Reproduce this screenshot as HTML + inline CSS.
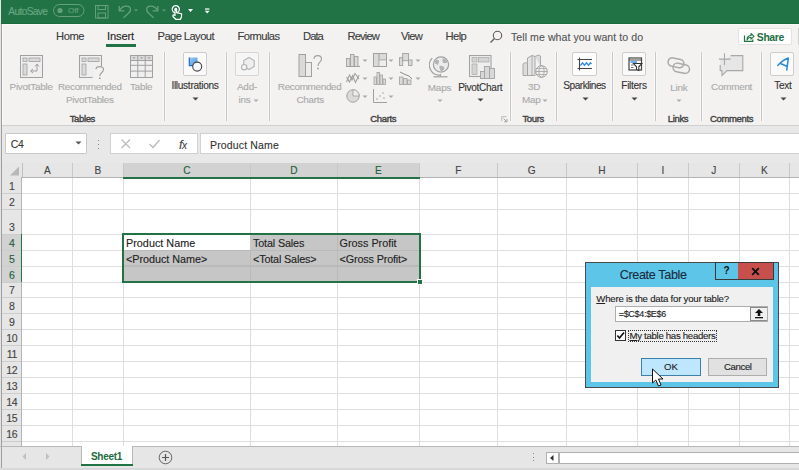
<!DOCTYPE html>
<html><head><meta charset="utf-8"><style>
html,body{margin:0;padding:0;}
body{width:799px;height:470px;overflow:hidden;position:relative;background:#fff;font-family:"Liberation Sans", sans-serif;}
div,svg{font-family:"Liberation Sans", sans-serif;}
div{-webkit-text-stroke:0.12px currentColor;}
</style></head><body>
<div style="position:absolute;left:0px;top:0px;width:799px;height:24px;background:#217346"></div><div style="position:absolute;left:0px;top:23px;width:799px;height:1px;background:#1c6a3f"></div><div style="position:absolute;left:8.3px;top:6.69px;font-size:10.1px;line-height:10.1px;color:#69a883;font-weight:400;letter-spacing:-0.6px;white-space:nowrap;">AutoSave</div><svg style="position:absolute;left:53px;top:4px;" width="32" height="13" viewBox="0 0 32 13"><rect x="0.5" y="0.5" width="30.5" height="12" rx="6" fill="none" stroke="#64a07c" stroke-width="1"/><circle cx="7" cy="6.5" r="2.6" fill="#64a07c"/></svg><div style="position:absolute;left:68px;top:6.76px;font-size:8px;line-height:8px;color:#64a07c;font-weight:400;letter-spacing:0px;white-space:nowrap;">Off</div><svg style="position:absolute;left:95px;top:5px;" width="14" height="14" viewBox="0 0 14 14"><rect x="0.5" y="0.5" width="12.5" height="12.5" fill="none" stroke="#64a07c"/><rect x="3" y="0.5" width="7.5" height="4" fill="none" stroke="#64a07c"/><rect x="3" y="8" width="7.5" height="5" fill="none" stroke="#64a07c"/></svg><svg style="position:absolute;left:117px;top:5px;" width="24" height="15" viewBox="0 0 24 15"><path d="M2.3 0.9 L2.3 5.8 L7.5 5.8" fill="none" stroke="#64a07c" stroke-width="1.3"/><path d="M2.8 5.3 C6 -0.5 13.5 0.2 13.5 4.8 C13.5 6.5 12.8 7.3 6.5 12.8" fill="none" stroke="#64a07c" stroke-width="1.3"/><path d="M17 4.5 L21 4.5 L19 6.5 Z" fill="#64a07c"/></svg><svg style="position:absolute;left:145px;top:5px;" width="24" height="15" viewBox="0 0 24 15"><path d="M12.8 0.9 L12.8 5.8 L7.6 5.8" fill="none" stroke="#64a07c" stroke-width="1.3"/><path d="M12.3 5.3 C9.1 -0.5 1.6 0.2 1.6 4.8 C1.6 6.5 2.3 7.3 8.6 12.8" fill="none" stroke="#64a07c" stroke-width="1.3"/><path d="M17 4.5 L21 4.5 L19 6.5 Z" fill="#64a07c"/></svg><svg style="position:absolute;left:171px;top:5px;" width="13" height="16" viewBox="0 0 13 16"><circle cx="4.8" cy="4.3" r="3.6" fill="none" stroke="#fff" stroke-width="1.2"/><circle cx="4.8" cy="4.2" r="1.4" fill="#fff"/><path d="M4 5.5 L4 10.5 L2.8 9.8 C1.8 9.8 1.5 11 2.2 11.8 L4.8 14.3 L9.3 14.3 C10.3 13.3 10.6 12 10.6 10.3 L10.6 8.8 L5.6 7.6 L5.6 5.5 Z" fill="#217346" stroke="#fff" stroke-width="1.2" stroke-linejoin="round"/></svg><svg style="position:absolute;left:187px;top:8px;" width="7" height="5" viewBox="0 0 7 5"><path d="M1 1 L6 1 L3.5 4 Z" fill="#fff"/></svg><svg style="position:absolute;left:204px;top:7px;" width="8" height="8" viewBox="0 0 8 8"><rect x="1" y="1.3" width="4.4" height="1.4" fill="#e8e8e8"/><path d="M0.8 3.8 L5.6 3.8 L3.2 6.6 Z" fill="#fff"/></svg><div style="position:absolute;left:0px;top:24px;width:799px;height:101px;background:#f3f2f1"></div><div style="position:absolute;left:0px;top:24px;width:799px;height:1px;background:#f8f8f8"></div><div style="position:absolute;left:56px;top:30.84px;font-size:11.2px;line-height:11.2px;color:#3c3c3c;font-weight:400;letter-spacing:-0.45px;white-space:nowrap;">Home</div><div style="position:absolute;left:107px;top:30.84px;font-size:11.2px;line-height:11.2px;color:#262626;font-weight:400;letter-spacing:-0.15px;white-space:nowrap;">Insert</div><div style="position:absolute;left:157.5px;top:30.84px;font-size:11.2px;line-height:11.2px;color:#3c3c3c;font-weight:400;letter-spacing:-0.58px;white-space:nowrap;">Page Layout</div><div style="position:absolute;left:237.5px;top:30.84px;font-size:11.2px;line-height:11.2px;color:#3c3c3c;font-weight:400;letter-spacing:-0.58px;white-space:nowrap;">Formulas</div><div style="position:absolute;left:303px;top:30.84px;font-size:11.2px;line-height:11.2px;color:#3c3c3c;font-weight:400;letter-spacing:-0.95px;white-space:nowrap;">Data</div><div style="position:absolute;left:347.5px;top:30.84px;font-size:11.2px;line-height:11.2px;color:#3c3c3c;font-weight:400;letter-spacing:-0.87px;white-space:nowrap;">Review</div><div style="position:absolute;left:401px;top:30.84px;font-size:11.2px;line-height:11.2px;color:#3c3c3c;font-weight:400;letter-spacing:-0.7px;white-space:nowrap;">View</div><div style="position:absolute;left:445.5px;top:30.84px;font-size:11.2px;line-height:11.2px;color:#3c3c3c;font-weight:400;letter-spacing:-0.57px;white-space:nowrap;">Help</div><div style="position:absolute;left:106px;top:44px;width:29.5px;height:2.5px;background:#217346"></div><svg style="position:absolute;left:489px;top:30px;" width="14" height="14" viewBox="0 0 14 14"><circle cx="8.5" cy="5.5" r="4.2" fill="none" stroke="#5a5a5a" stroke-width="1.1"/><path d="M5.5 8.5 L1.5 12.5" stroke="#5a5a5a" stroke-width="1.3"/></svg><div style="position:absolute;left:511px;top:31.62px;font-size:10.6px;line-height:10.6px;color:#555;font-weight:400;letter-spacing:0.05px;white-space:nowrap;">Tell me what you want to do</div><div style="position:absolute;left:738px;top:28px;width:53.5px;height:17px;background:#fdfdfd;border:1px solid #e2e2e2;border-radius:2px;box-sizing:border-box"></div><svg style="position:absolute;left:743px;top:31px;" width="13" height="12" viewBox="0 0 13 12"><path d="M1.5 4.5 L1.5 10.3 L9.8 10.3 L9.8 8.5" fill="none" stroke="#217346" stroke-width="1.2"/><path d="M4 9 C4 6 5.5 4.5 8 4.5 L8 2.5 L11 5.3 L8 8.1 L8 6.3 C6.5 6.3 5 7 4 9Z" fill="none" stroke="#217346" stroke-width="1.1" stroke-linejoin="round"/></svg><div style="position:absolute;left:756.8px;top:33.15px;font-size:10.4px;line-height:10.4px;color:#1f6e43;font-weight:700;letter-spacing:-0.35px;white-space:nowrap;-webkit-text-stroke:0;">Share</div><div style="position:absolute;left:797.5px;top:28px;width:1px;height:17px;background:#d0d0d0"></div><div style="position:absolute;left:163px;top:52px;width:3px;height:69px;background:#f9f9f9"></div><div style="position:absolute;left:164px;top:52px;width:1px;height:69px;background:#c6c6c6"></div><div style="position:absolute;left:225px;top:52px;width:3px;height:69px;background:#f9f9f9"></div><div style="position:absolute;left:226px;top:52px;width:1px;height:69px;background:#c6c6c6"></div><div style="position:absolute;left:268px;top:52px;width:3px;height:69px;background:#f9f9f9"></div><div style="position:absolute;left:269px;top:52px;width:1px;height:69px;background:#c6c6c6"></div><div style="position:absolute;left:509px;top:52px;width:3px;height:69px;background:#f9f9f9"></div><div style="position:absolute;left:510px;top:52px;width:1px;height:69px;background:#c6c6c6"></div><div style="position:absolute;left:555px;top:52px;width:3px;height:69px;background:#f9f9f9"></div><div style="position:absolute;left:556px;top:52px;width:1px;height:69px;background:#c6c6c6"></div><div style="position:absolute;left:611px;top:52px;width:3px;height:69px;background:#f9f9f9"></div><div style="position:absolute;left:612px;top:52px;width:1px;height:69px;background:#c6c6c6"></div><div style="position:absolute;left:654px;top:52px;width:3px;height:69px;background:#f9f9f9"></div><div style="position:absolute;left:655px;top:52px;width:1px;height:69px;background:#c6c6c6"></div><div style="position:absolute;left:700px;top:52px;width:3px;height:69px;background:#f9f9f9"></div><div style="position:absolute;left:701px;top:52px;width:1px;height:69px;background:#c6c6c6"></div><div style="position:absolute;left:760px;top:52px;width:3px;height:69px;background:#f9f9f9"></div><div style="position:absolute;left:761px;top:52px;width:1px;height:69px;background:#c6c6c6"></div><div style="position:absolute;left:0px;top:124.5px;width:799px;height:1px;background:#d0d0d0"></div><div style="position:absolute;left:0px;top:125.5px;width:799px;height:345px;background:#e8e8e8"></div><svg style="position:absolute;left:20px;top:54.5px;" width="26" height="25" viewBox="0 0 26 25"><rect x="0.5" y="0.5" width="22" height="22" fill="#efefef" stroke="#a0a0a0" stroke-width="1"/><rect x="3" y="3" width="4" height="3.5" fill="#dadada" stroke="#a0a0a0" stroke-width="0.8"/><rect x="9" y="3" width="11" height="3.5" fill="#dadada" stroke="#a0a0a0" stroke-width="0.8"/><rect x="3" y="9" width="4" height="11" fill="#dadada" stroke="#a0a0a0" stroke-width="0.8"/><path d="M17 9.5 L17 16 L11 16" fill="none" stroke="#a0a0a0" stroke-width="1"/><path d="M15 11.5 L17 9 L19 11.5" fill="none" stroke="#a0a0a0" stroke-width="1"/><path d="M13 14 L10.5 16 L13 18" fill="none" stroke="#a0a0a0" stroke-width="1"/></svg><svg style="position:absolute;left:79px;top:54.5px;" width="26" height="25" viewBox="0 0 26 25"><rect x="0.5" y="0.5" width="22" height="22" fill="#efefef"/><path d="M13.5 22.5 L0.5 22.5 L0.5 0.5 L22.5 0.5 L22.5 11" fill="none" stroke="#a0a0a0" stroke-width="1.1"/><rect x="3" y="3" width="4" height="3.5" fill="#dadada" stroke="#a0a0a0" stroke-width="0.8"/><rect x="9" y="3" width="11" height="3.5" fill="#dadada" stroke="#a0a0a0" stroke-width="0.8"/><rect x="3" y="9" width="4" height="11" fill="#dadada" stroke="#a0a0a0" stroke-width="0.8"/><rect x="15" y="11" width="10" height="13" fill="#f3f2f1"/><path d="M17 14.2 C17 10.8 24.5 10.5 24.5 14.5 C24.5 17.5 20.8 17.5 20.8 21" fill="none" stroke="#a0a0a0" stroke-width="1.2"/><circle cx="20.8" cy="23.2" r="0.9" fill="#a0a0a0"/></svg><svg style="position:absolute;left:130px;top:54.5px;" width="24" height="24" viewBox="0 0 24 24"><rect x="0.5" y="0.5" width="22" height="22" fill="#efefef" stroke="#a0a0a0"/><rect x="0.5" y="0.5" width="22" height="5" fill="#dadada" stroke="#a0a0a0"/><line x1="7.8" y1="0.5" x2="7.8" y2="22.5" stroke="#a0a0a0"/><line x1="15.2" y1="0.5" x2="15.2" y2="22.5" stroke="#a0a0a0"/><line x1="0.5" y1="10.3" x2="22.5" y2="10.3" stroke="#a0a0a0"/><line x1="0.5" y1="16.1" x2="22.5" y2="16.1" stroke="#a0a0a0"/><path d="M2.5 2.3 L5.5 2.3 L4 4 Z" fill="#a0a0a0"/><path d="M10.0 2.3 L13.0 2.3 L11.5 4 Z" fill="#a0a0a0"/><path d="M17.5 2.3 L20.5 2.3 L19 4 Z" fill="#a0a0a0"/></svg><div style="position:absolute;left:9.6px;top:82.31px;font-size:9.9px;line-height:9.9px;color:#a9a9a9;font-weight:400;letter-spacing:-0.25px;white-space:nowrap;">PivotTable</div><div style="position:absolute;left:58px;top:82.31px;font-size:9.9px;line-height:9.9px;color:#a9a9a9;font-weight:400;letter-spacing:-0.3px;white-space:nowrap;">Recommended</div><div style="position:absolute;left:66px;top:95.31px;font-size:9.9px;line-height:9.9px;color:#a9a9a9;font-weight:400;letter-spacing:-0.25px;white-space:nowrap;">PivotTables</div><div style="position:absolute;left:130px;top:82.31px;font-size:9.9px;line-height:9.9px;color:#a9a9a9;font-weight:400;letter-spacing:-0.25px;white-space:nowrap;">Table</div><div style="position:absolute;left:-117.7px;width:400px;text-align:center;top:113.77px;font-size:9.5px;line-height:9.5px;color:#444;font-weight:400;letter-spacing:-0.35px;white-space:nowrap;-webkit-text-stroke:0.4px currentColor;">Tables</div><div style="position:absolute;left:183px;top:51.5px;width:24px;height:24px;background:#fafafa;border:1px solid #cdcdcd;border-radius:2px;box-sizing:border-box"></div><svg style="position:absolute;left:183px;top:51.5px;" width="24" height="24" viewBox="0 0 24 24"><defs><linearGradient id="gb" x1="0" y1="0" x2="1" y2="1"><stop offset="0" stop-color="#9ccbf5"/><stop offset="1" stop-color="#4a92de"/></linearGradient></defs><rect x="6" y="5.5" width="8.5" height="8.5" fill="url(#gb)"/><path d="M6.3 5.5 L6.3 13.7 L14.5 13.7" fill="none" stroke="#2a6fc4" stroke-width="1.2"/><circle cx="14.2" cy="14.6" r="4.5" fill="#fafafa" stroke="#444" stroke-width="1.1"/></svg><div style="position:absolute;left:-5px;width:400px;text-align:center;top:80.69px;font-size:10.1px;line-height:10.1px;color:#333;font-weight:400;letter-spacing:-0.3px;white-space:nowrap;">Illustrations</div><svg style="position:absolute;left:192px;top:97px;" width="7" height="4" viewBox="0 0 7 4"><path d="M0.5 0.5 L6.5 0.5 L3.5 3.5Z" fill="#444"/></svg><div style="position:absolute;left:235px;top:51.5px;width:24px;height:24px;background:#f6f6f6;border:1px solid #d6d6d6;border-radius:2px;box-sizing:border-box"></div><svg style="position:absolute;left:235px;top:51.5px;" width="24" height="24" viewBox="0 0 24 24"><path d="M14 5.5 L19.2 8.5 L19.2 14.5 L14 17.5 L8.8 14.5 L8.8 8.5 Z" fill="#efefef" stroke="#b4b4b4" stroke-width="1.1"/><circle cx="9.2" cy="15.2" r="2.7" fill="#f4f4f4" stroke="#b4b4b4" stroke-width="1.1"/></svg><div style="position:absolute;left:47px;width:400px;text-align:center;top:82.31px;font-size:9.9px;line-height:9.9px;color:#a9a9a9;font-weight:400;letter-spacing:-0.2px;white-space:nowrap;">Add-</div><div style="position:absolute;left:44.5px;width:400px;text-align:center;top:95.31px;font-size:9.9px;line-height:9.9px;color:#a9a9a9;font-weight:400;letter-spacing:-0.2px;white-space:nowrap;">ins</div><svg style="position:absolute;left:252.5px;top:98.5px;" width="6" height="4" viewBox="0 0 6 4"><path d="M0.5 0.5 L5.5 0.5 L3 3Z" fill="#a9a9a9"/></svg><svg style="position:absolute;left:298px;top:54px;" width="26" height="24" viewBox="0 0 26 24"><rect x="1" y="0.5" width="6.5" height="22" fill="#dadada" stroke="#a0a0a0"/><rect x="7.5" y="8.5" width="6" height="14" fill="#ececec" stroke="#a0a0a0"/><path d="M16 5 C16 0.5 23.5 0.5 23.5 5 C23.5 8 20 8.5 20 12" fill="none" stroke="#a0a0a0" stroke-width="1.1"/><circle cx="20" cy="14.5" r="0.9" fill="#a0a0a0"/></svg><div style="position:absolute;left:109.69999999999999px;width:400px;text-align:center;top:82.31px;font-size:9.9px;line-height:9.9px;color:#a9a9a9;font-weight:400;letter-spacing:-0.3px;white-space:nowrap;">Recommended</div><div style="position:absolute;left:110.19999999999999px;width:400px;text-align:center;top:95.31px;font-size:9.9px;line-height:9.9px;color:#a9a9a9;font-weight:400;letter-spacing:-0.25px;white-space:nowrap;">Charts</div><svg style="position:absolute;left:346px;top:53px;" width="14" height="14" viewBox="0 0 14 14"><rect x="0.5" y="5.5" width="3.5" height="8" fill="#dadada" stroke="#a0a0a0" stroke-width="0.9"/><rect x="4.5" y="1.5" width="3.5" height="12" fill="#dadada" stroke="#a0a0a0" stroke-width="0.9"/><rect x="8.5" y="3.5" width="3.5" height="10" fill="#dadada" stroke="#a0a0a0" stroke-width="0.9"/><line x1="0" y1="13.5" x2="14" y2="13.5" stroke="#a0a0a0"/></svg><svg style="position:absolute;left:361.5px;top:59px;" width="6" height="4" viewBox="0 0 6 4"><path d="M0.5 0.5 L5.5 0.5 L3 3Z" fill="#a9a9a9"/></svg><svg style="position:absolute;left:372.5px;top:53px;" width="14" height="14" viewBox="0 0 14 14"><rect x="0.5" y="0.5" width="13" height="13" fill="#dadada" stroke="#a0a0a0"/><line x1="6" y1="0.5" x2="6" y2="13.5" stroke="#a0a0a0"/><line x1="6" y1="7" x2="13.5" y2="7" stroke="#a0a0a0"/><rect x="6.5" y="7.5" width="6.5" height="5.5" fill="#eee"/></svg><svg style="position:absolute;left:388px;top:59px;" width="6" height="4" viewBox="0 0 6 4"><path d="M0.5 0.5 L5.5 0.5 L3 3Z" fill="#a9a9a9"/></svg><svg style="position:absolute;left:398.5px;top:53px;" width="14" height="14" viewBox="0 0 14 14"><rect x="0.5" y="4.7" width="3.2" height="7.8" fill="#dadada" stroke="#a0a0a0" stroke-width="0.9"/><rect x="3.7" y="0.5" width="5.8" height="7.2" fill="#dadada" stroke="#a0a0a0" stroke-width="0.9"/><rect x="9.5" y="7" width="3.5" height="5.5" fill="#dadada" stroke="#a0a0a0" stroke-width="0.9"/></svg><svg style="position:absolute;left:414.5px;top:59px;" width="6" height="4" viewBox="0 0 6 4"><path d="M0.5 0.5 L5.5 0.5 L3 3Z" fill="#a9a9a9"/></svg><svg style="position:absolute;left:346px;top:71px;" width="14" height="14" viewBox="0 0 14 14"><path d="M0.5 11 L3.5 4 L6 9 L9 2.5 L13 8" fill="none" stroke="#a0a0a0" stroke-width="1.1"/><path d="M0.5 6 L3.5 11 L6.5 4.5 L9.5 11.5 L13 4" fill="none" stroke="#a0a0a0" stroke-width="1.1"/></svg><svg style="position:absolute;left:361.5px;top:77px;" width="6" height="4" viewBox="0 0 6 4"><path d="M0.5 0.5 L5.5 0.5 L3 3Z" fill="#a9a9a9"/></svg><svg style="position:absolute;left:372.5px;top:71px;" width="14" height="14" viewBox="0 0 14 14"><rect x="1" y="6" width="2.5" height="7.5" fill="#dadada" stroke="#a0a0a0" stroke-width="0.8"/><rect x="4" y="1.5" width="2.5" height="12" fill="#dadada" stroke="#a0a0a0" stroke-width="0.8"/><rect x="7" y="4" width="2.5" height="9.5" fill="#dadada" stroke="#a0a0a0" stroke-width="0.8"/><rect x="10" y="8" width="2.5" height="5.5" fill="#dadada" stroke="#a0a0a0" stroke-width="0.8"/></svg><svg style="position:absolute;left:388px;top:77px;" width="6" height="4" viewBox="0 0 6 4"><path d="M0.5 0.5 L5.5 0.5 L3 3Z" fill="#a9a9a9"/></svg><svg style="position:absolute;left:398.5px;top:71px;" width="14" height="14" viewBox="0 0 14 14"><rect x="0.5" y="6" width="3.5" height="7.5" fill="#dadada" stroke="#a0a0a0" stroke-width="0.8"/><rect x="4.5" y="7.5" width="3.5" height="6" fill="#dadada" stroke="#a0a0a0" stroke-width="0.8"/><rect x="8.5" y="9" width="3.5" height="4.5" fill="#dadada" stroke="#a0a0a0" stroke-width="0.8"/><path d="M1 1 L6 3.5 L10 5 L13 8" fill="none" stroke="#8a8a8a" stroke-width="1"/></svg><svg style="position:absolute;left:414.5px;top:77px;" width="6" height="4" viewBox="0 0 6 4"><path d="M0.5 0.5 L5.5 0.5 L3 3Z" fill="#a9a9a9"/></svg><svg style="position:absolute;left:346px;top:89px;" width="14" height="14" viewBox="0 0 14 14"><circle cx="7" cy="7" r="6.2" fill="#dadada" stroke="#a0a0a0"/><path d="M7 7 L7 0.8 A6.2 6.2 0 0 1 13.2 7 Z" fill="#eee" stroke="#a0a0a0" stroke-width="0.8"/></svg><svg style="position:absolute;left:361.5px;top:95px;" width="6" height="4" viewBox="0 0 6 4"><path d="M0.5 0.5 L5.5 0.5 L3 3Z" fill="#a9a9a9"/></svg><svg style="position:absolute;left:372.5px;top:89px;" width="14" height="14" viewBox="0 0 14 14"><path d="M0.5 0 L0.5 13.5 L14 13.5" fill="none" stroke="#a0a0a0"/><circle cx="4" cy="10" r="0.8" fill="#a0a0a0"/><circle cx="7" cy="7" r="0.8" fill="#a0a0a0"/><circle cx="10" cy="4" r="0.8" fill="#a0a0a0"/><circle cx="11" cy="9" r="0.8" fill="#a0a0a0"/></svg><svg style="position:absolute;left:388px;top:95px;" width="6" height="4" viewBox="0 0 6 4"><path d="M0.5 0.5 L5.5 0.5 L3 3Z" fill="#a9a9a9"/></svg><div style="position:absolute;left:183.3px;width:400px;text-align:center;top:113.77px;font-size:9.5px;line-height:9.5px;color:#444;font-weight:400;letter-spacing:-0.35px;white-space:nowrap;-webkit-text-stroke:0.4px currentColor;">Charts</div><svg style="position:absolute;left:429px;top:54px;" width="22" height="24" viewBox="0 0 22 24"><path d="M3.2 4.2 A10 10 0 0 0 12 21" fill="none" stroke="#a0a0a0" stroke-width="1.2"/><circle cx="12" cy="10.5" r="7.6" fill="#ececec" stroke="#a0a0a0" stroke-width="1.2"/><path d="M6 6.5 C7.5 5.5 9.5 5.5 10 7 C10.5 8.5 9 9 9.5 10.5 C8 11 6.5 10 5.5 9 Z" fill="#b4b4b4"/><path d="M13.5 4.5 C15.5 4.5 18 6 18.5 8.5 C17.5 9.5 16 8.5 15 9.5 C14 8.5 13 7 13.5 4.5Z" fill="#b4b4b4"/><path d="M10.5 12 C12.5 11.5 15 12.5 15.5 14 C15 16 13.5 17.5 12 17.5 C11.5 16 10 14.5 10.5 12Z" fill="#b4b4b4"/><line x1="11.5" y1="20" x2="11.5" y2="22.5" stroke="#a0a0a0" stroke-width="1.1"/><line x1="4.5" y1="22.8" x2="18.5" y2="22.8" stroke="#a0a0a0" stroke-width="1.2"/></svg><div style="position:absolute;left:239.5px;width:400px;text-align:center;top:82.71px;font-size:9.9px;line-height:9.9px;color:#a9a9a9;font-weight:400;letter-spacing:-0.2px;white-space:nowrap;">Maps</div><svg style="position:absolute;left:436.5px;top:98.5px;" width="6" height="4" viewBox="0 0 6 4"><path d="M0.5 0.5 L5.5 0.5 L3 3Z" fill="#a9a9a9"/></svg><svg style="position:absolute;left:469px;top:55px;" width="27" height="24" viewBox="0 0 27 24"><rect x="0.5" y="0.5" width="21.5" height="21" fill="#efefef" stroke="#a2a2a2" stroke-width="1.1"/><rect x="3" y="2.5" width="5" height="4.5" fill="#d4d4d4" stroke="#a8a8a8" stroke-width="0.7"/><rect x="9.5" y="2.5" width="10.5" height="4.5" fill="#d4d4d4" stroke="#a8a8a8" stroke-width="0.7"/><rect x="3" y="9" width="5" height="10.5" fill="#d4d4d4" stroke="#a8a8a8" stroke-width="0.7"/><rect x="11.5" y="16.5" width="4" height="7" fill="#d8d8d8" stroke="#a2a2a2" stroke-width="0.9"/><rect x="15.5" y="11.5" width="5" height="12" fill="#d8d8d8" stroke="#a2a2a2" stroke-width="0.9"/><rect x="20.5" y="13.5" width="5" height="10" fill="#d8d8d8" stroke="#a2a2a2" stroke-width="0.9"/></svg><div style="position:absolute;left:280.2px;width:400px;text-align:center;top:82.69px;font-size:10.1px;line-height:10.1px;color:#333;font-weight:400;letter-spacing:-0.3px;white-space:nowrap;">PivotChart</div><svg style="position:absolute;left:477px;top:98px;" width="7" height="4" viewBox="0 0 7 4"><path d="M0.5 0.5 L6.5 0.5 L3.5 3.5Z" fill="#444"/></svg><svg style="position:absolute;left:501px;top:116px;" width="7" height="7" viewBox="0 0 7 7"><path d="M0.7 5 L0.7 0.7 L5.5 0.7" fill="none" stroke="#b8b8b8" stroke-width="1"/><path d="M2.5 2.5 L5.5 5.5" stroke="#a0a0a0" stroke-width="1"/><path d="M3.2 5.8 L6 5.8 L6 3" fill="none" stroke="#a0a0a0" stroke-width="1"/></svg><svg style="position:absolute;left:522px;top:54px;" width="27" height="25" viewBox="0 0 27 25"><path d="M1 10 L3.5 8.5 L5.5 9.5 L5.5 21.5 L1 21.5 Z" fill="#dcdcdc" stroke="#a0a0a0" stroke-width="0.9"/><path d="M5.5 4 L10 1.5 L13 2.5 L13 21.5 L5.5 21.5 Z" fill="#e4e4e4" stroke="#a0a0a0" stroke-width="0.9"/><path d="M10 1.5 L10 21.5" stroke="#a0a0a0" stroke-width="0.8"/><path d="M13 2.5 L16.5 1 L18.5 2 L18.5 12" fill="#dcdcdc" stroke="#a0a0a0" stroke-width="0.9"/><circle cx="19.5" cy="17.5" r="5.8" fill="#efefef" stroke="#a0a0a0" stroke-width="1"/><ellipse cx="19.5" cy="17.5" rx="2.6" ry="5.8" fill="none" stroke="#a0a0a0" stroke-width="0.8"/><line x1="13.7" y1="17.5" x2="25.3" y2="17.5" stroke="#a0a0a0" stroke-width="0.8"/><line x1="14.5" y1="14.5" x2="24.5" y2="14.5" stroke="#a0a0a0" stroke-width="0.7"/><line x1="14.5" y1="20.5" x2="24.5" y2="20.5" stroke="#a0a0a0" stroke-width="0.7"/></svg><div style="position:absolute;left:334px;width:400px;text-align:center;top:82.31px;font-size:9.9px;line-height:9.9px;color:#a9a9a9;font-weight:400;letter-spacing:-0.2px;white-space:nowrap;">3D</div><div style="position:absolute;left:331.29999999999995px;width:400px;text-align:center;top:95.31px;font-size:9.9px;line-height:9.9px;color:#a9a9a9;font-weight:400;letter-spacing:-0.2px;white-space:nowrap;">Map</div><svg style="position:absolute;left:541.5px;top:98.5px;" width="6" height="4" viewBox="0 0 6 4"><path d="M0.5 0.5 L5.5 0.5 L3 3Z" fill="#a9a9a9"/></svg><div style="position:absolute;left:333.20000000000005px;width:400px;text-align:center;top:113.77px;font-size:9.5px;line-height:9.5px;color:#444;font-weight:400;letter-spacing:-0.35px;white-space:nowrap;-webkit-text-stroke:0.4px currentColor;">Tours</div><div style="position:absolute;left:572px;top:51.5px;width:24.5px;height:24px;background:#fdfdfd;border:1px solid #cdcdcd;border-radius:2px;box-sizing:border-box"></div><svg style="position:absolute;left:572px;top:51.5px;" width="25" height="24" viewBox="0 0 25 24"><path d="M7.5 5.5 L7.5 18.5" stroke="#444" stroke-width="1.1"/><path d="M5.5 7.5 L20 7.5 M5.5 16.5 L20 16.5" stroke="#444" stroke-width="1.1"/><path d="M8.5 13.5 L10.5 10.8 L12.5 13.2 L14.5 10.8 L16.5 13.2 L18.5 10.8 L19.5 12" fill="none" stroke="#2e8ae6" stroke-width="1.3"/></svg><div style="position:absolute;left:384.5px;width:400px;text-align:center;top:80.69px;font-size:10.1px;line-height:10.1px;color:#333;font-weight:400;letter-spacing:-0.48px;white-space:nowrap;">Sparklines</div><svg style="position:absolute;left:581.5px;top:97px;" width="7" height="4" viewBox="0 0 7 4"><path d="M0.5 0.5 L6.5 0.5 L3.5 3.5Z" fill="#444"/></svg><div style="position:absolute;left:621.5px;top:51.5px;width:24.5px;height:24px;background:#fafafa;border:1px solid #cdcdcd;border-radius:2px;box-sizing:border-box"></div><svg style="position:absolute;left:621.5px;top:51.5px;" width="25" height="24" viewBox="0 0 25 24"><rect x="7" y="6" width="12.5" height="12" fill="#fff" stroke="#444" stroke-width="1.2"/><path d="M7 8 L19.5 8" stroke="#444" stroke-width="1"/><path d="M8.5 10 L15 10" stroke="#2e8ae6" stroke-width="1.4"/><path d="M9 13 L11.5 13 M9 15.5 L11.5 15.5" stroke="#777" stroke-width="1"/><path d="M11.5 11.5 L19.8 11.5 L16.8 14.8 L16.8 18.5 L14.5 17.5 L14.5 14.8 Z" fill="#fff" stroke="#333" stroke-width="1.1"/></svg><div style="position:absolute;left:434px;width:400px;text-align:center;top:80.69px;font-size:10.1px;line-height:10.1px;color:#333;font-weight:400;letter-spacing:-0.3px;white-space:nowrap;">Filters</div><svg style="position:absolute;left:631px;top:97px;" width="7" height="4" viewBox="0 0 7 4"><path d="M0.5 0.5 L6.5 0.5 L3.5 3.5Z" fill="#444"/></svg><svg style="position:absolute;left:666px;top:56px;" width="26" height="19" viewBox="0 0 26 19"><g transform="rotate(12 10 6.8)"><rect x="2" y="2.6" width="16" height="8.4" rx="4.2" fill="none" stroke="#aaa" stroke-width="1.5"/></g><g transform="rotate(12 15.3 12.2)"><rect x="7" y="8" width="16.6" height="8.6" rx="4.3" fill="none" stroke="#aaa" stroke-width="1.5"/></g></svg><div style="position:absolute;left:478.79999999999995px;width:400px;text-align:center;top:82.71px;font-size:9.9px;line-height:9.9px;color:#a9a9a9;font-weight:400;letter-spacing:-0.2px;white-space:nowrap;">Link</div><svg style="position:absolute;left:675.5px;top:99px;" width="6" height="4" viewBox="0 0 6 4"><path d="M0.5 0.5 L5.5 0.5 L3 3Z" fill="#a9a9a9"/></svg><div style="position:absolute;left:478px;width:400px;text-align:center;top:113.77px;font-size:9.5px;line-height:9.5px;color:#444;font-weight:400;letter-spacing:-0.35px;white-space:nowrap;-webkit-text-stroke:0.4px currentColor;">Links</div><svg style="position:absolute;left:718px;top:53px;" width="27" height="24" viewBox="0 0 27 24"><rect x="2.2" y="6" width="11" height="11.6" fill="#e6e6e6"/><path d="M12.6 2.6 L24.8 2.6 L24.8 17.6 L9 17.6 L4 22.5 L4 17.6 L2.2 17.6 L2.2 12" fill="#e6e6e6" stroke="#a8a8a8" stroke-width="1.1"/><path d="M6.5 0.3 L6.5 12 M0.9 6.1 L12.6 6.1" stroke="#a8a8a8" stroke-width="1.1"/></svg><div style="position:absolute;left:531.6px;width:400px;text-align:center;top:82.31px;font-size:9.9px;line-height:9.9px;color:#a9a9a9;font-weight:400;letter-spacing:-0.25px;white-space:nowrap;">Comment</div><div style="position:absolute;left:531.6px;width:400px;text-align:center;top:113.77px;font-size:9.5px;line-height:9.5px;color:#444;font-weight:400;letter-spacing:-0.35px;white-space:nowrap;-webkit-text-stroke:0.4px currentColor;">Comments</div><div style="position:absolute;left:770px;top:51.5px;width:24px;height:24px;background:#fafafa;border:1px solid #cdcdcd;border-radius:2px;box-sizing:border-box"></div><svg style="position:absolute;left:770px;top:51.5px;" width="24" height="24" viewBox="0 0 24 24"><path d="M7.8 13.5 C10 11 14 7.5 18.3 6 L16.8 18 M10.5 11.5 L16.8 14.2" fill="none" stroke="#2b88d8" stroke-width="1.5" stroke-linecap="round" stroke-linejoin="round"/></svg><div style="position:absolute;left:582.8px;width:400px;text-align:center;top:80.69px;font-size:10.1px;line-height:10.1px;color:#333;font-weight:400;letter-spacing:-0.3px;white-space:nowrap;">Text</div><svg style="position:absolute;left:779.5px;top:97px;" width="7" height="4" viewBox="0 0 7 4"><path d="M0.5 0.5 L6.5 0.5 L3.5 3.5Z" fill="#444"/></svg><div style="position:absolute;left:5px;top:133px;width:82px;height:21px;background:#fff;border:1px solid #c8c8c8;box-sizing:border-box;border-radius:1px"></div><div style="position:absolute;left:10.8px;top:139.65px;font-size:10.4px;line-height:10.4px;color:#333;font-weight:400;letter-spacing:-0.3px;white-space:nowrap;">C4</div><svg style="position:absolute;left:75px;top:141px;" width="7" height="4" viewBox="0 0 7 4"><path d="M0.5 0.5 L6.5 0.5 L3.5 3.5Z" fill="#555"/></svg><div style="position:absolute;left:98px;top:140px;width:1.3px;height:1.3px;background:#8a8a8a"></div><div style="position:absolute;left:98px;top:144px;width:1.3px;height:1.3px;background:#8a8a8a"></div><div style="position:absolute;left:98px;top:148px;width:1.3px;height:1.3px;background:#8a8a8a"></div><div style="position:absolute;left:110px;top:133px;width:88px;height:21px;background:#fff;border:1px solid #d0d0d0;box-sizing:border-box"></div><svg style="position:absolute;left:120px;top:138px;" width="12" height="12" viewBox="0 0 12 12"><path d="M1.5 1.5 L10 10 M10 1.5 L1.5 10" stroke="#b8b8b8" stroke-width="1.1"/></svg><svg style="position:absolute;left:148px;top:138px;" width="13" height="12" viewBox="0 0 13 12"><path d="M1.5 6 L5 9.5 L11.5 2" fill="none" stroke="#b8b8b8" stroke-width="1.2"/></svg><div style="position:absolute;left:179px;top:139.38px;font-size:12.5px;line-height:12.5px;color:#444;font-weight:400;letter-spacing:-0.5px;white-space:nowrap;font-family:"Liberation Serif",serif;"><i>f<span style="font-size:10px">x</span></i></div><div style="position:absolute;left:200px;top:133px;width:610px;height:21px;background:#fff;border:1px solid #d0d0d0;box-sizing:border-box"></div><div style="position:absolute;left:210px;top:139.63px;font-size:10.5px;line-height:10.5px;color:#333;font-weight:400;letter-spacing:0.15px;white-space:nowrap;">Product Name</div><div style="position:absolute;left:22px;top:177px;width:777px;height:269px;background:#fff"></div><div style="position:absolute;left:72px;top:177px;width:1px;height:269px;background:#dedede"></div><div style="position:absolute;left:123px;top:177px;width:1px;height:269px;background:#dedede"></div><div style="position:absolute;left:250px;top:177px;width:1px;height:269px;background:#dedede"></div><div style="position:absolute;left:337px;top:177px;width:1px;height:269px;background:#dedede"></div><div style="position:absolute;left:419px;top:177px;width:1px;height:269px;background:#dedede"></div><div style="position:absolute;left:497px;top:177px;width:1px;height:269px;background:#dedede"></div><div style="position:absolute;left:566px;top:177px;width:1px;height:269px;background:#dedede"></div><div style="position:absolute;left:637px;top:177px;width:1px;height:269px;background:#dedede"></div><div style="position:absolute;left:688px;top:177px;width:1px;height:269px;background:#dedede"></div><div style="position:absolute;left:739px;top:177px;width:1px;height:269px;background:#dedede"></div><div style="position:absolute;left:789px;top:177px;width:1px;height:269px;background:#dedede"></div><div style="position:absolute;left:22px;top:193px;width:777px;height:1px;background:#dedede"></div><div style="position:absolute;left:22px;top:209px;width:777px;height:1px;background:#dedede"></div><div style="position:absolute;left:22px;top:234px;width:777px;height:1px;background:#dedede"></div><div style="position:absolute;left:22px;top:250px;width:777px;height:1px;background:#dedede"></div><div style="position:absolute;left:22px;top:266px;width:777px;height:1px;background:#dedede"></div><div style="position:absolute;left:22px;top:282px;width:777px;height:1px;background:#dedede"></div><div style="position:absolute;left:22px;top:297px;width:777px;height:1px;background:#dedede"></div><div style="position:absolute;left:22px;top:313px;width:777px;height:1px;background:#dedede"></div><div style="position:absolute;left:22px;top:329px;width:777px;height:1px;background:#dedede"></div><div style="position:absolute;left:22px;top:345px;width:777px;height:1px;background:#dedede"></div><div style="position:absolute;left:22px;top:361px;width:777px;height:1px;background:#dedede"></div><div style="position:absolute;left:22px;top:377px;width:777px;height:1px;background:#dedede"></div><div style="position:absolute;left:22px;top:393px;width:777px;height:1px;background:#dedede"></div><div style="position:absolute;left:22px;top:409px;width:777px;height:1px;background:#dedede"></div><div style="position:absolute;left:22px;top:425px;width:777px;height:1px;background:#dedede"></div><div style="position:absolute;left:22px;top:441px;width:777px;height:1px;background:#dedede"></div><div style="position:absolute;left:0px;top:162.5px;width:799px;height:14.5px;background:#e6e6e6"></div><div style="position:absolute;left:123px;top:162.5px;width:296.5px;height:14.5px;background:#d2d2d2"></div><div style="position:absolute;left:72px;top:163px;width:1px;height:14px;background:#c8c8c8"></div><div style="position:absolute;left:123px;top:163px;width:1px;height:14px;background:#c8c8c8"></div><div style="position:absolute;left:250px;top:163px;width:1px;height:14px;background:#c8c8c8"></div><div style="position:absolute;left:337px;top:163px;width:1px;height:14px;background:#c8c8c8"></div><div style="position:absolute;left:419px;top:163px;width:1px;height:14px;background:#c8c8c8"></div><div style="position:absolute;left:497px;top:163px;width:1px;height:14px;background:#c8c8c8"></div><div style="position:absolute;left:566px;top:163px;width:1px;height:14px;background:#c8c8c8"></div><div style="position:absolute;left:637px;top:163px;width:1px;height:14px;background:#c8c8c8"></div><div style="position:absolute;left:688px;top:163px;width:1px;height:14px;background:#c8c8c8"></div><div style="position:absolute;left:739px;top:163px;width:1px;height:14px;background:#c8c8c8"></div><div style="position:absolute;left:789px;top:163px;width:1px;height:14px;background:#c8c8c8"></div><div style="position:absolute;left:22px;top:163px;width:1px;height:14px;background:#c0c0c0"></div><div style="position:absolute;left:0px;top:177px;width:799px;height:1px;background:#b4b4b4"></div><div style="position:absolute;left:123px;top:176.5px;width:297px;height:2px;background:#217346"></div><div style="position:absolute;left:-152.7px;width:400px;text-align:center;top:165.69px;font-size:10.1px;line-height:10.1px;color:#444;font-weight:400;letter-spacing:0px;white-space:nowrap;">A</div><div style="position:absolute;left:-102.2px;width:400px;text-align:center;top:165.69px;font-size:10.1px;line-height:10.1px;color:#444;font-weight:400;letter-spacing:0px;white-space:nowrap;">B</div><div style="position:absolute;left:-13.199999999999989px;width:400px;text-align:center;top:165.69px;font-size:10.1px;line-height:10.1px;color:#1f5f3b;font-weight:400;letter-spacing:0px;white-space:nowrap;">C</div><div style="position:absolute;left:93.80000000000001px;width:400px;text-align:center;top:165.69px;font-size:10.1px;line-height:10.1px;color:#1f5f3b;font-weight:400;letter-spacing:0px;white-space:nowrap;">D</div><div style="position:absolute;left:178.3px;width:400px;text-align:center;top:165.69px;font-size:10.1px;line-height:10.1px;color:#1f5f3b;font-weight:400;letter-spacing:0px;white-space:nowrap;">E</div><div style="position:absolute;left:258.3px;width:400px;text-align:center;top:165.69px;font-size:10.1px;line-height:10.1px;color:#444;font-weight:400;letter-spacing:0px;white-space:nowrap;">F</div><div style="position:absolute;left:331.79999999999995px;width:400px;text-align:center;top:165.69px;font-size:10.1px;line-height:10.1px;color:#444;font-weight:400;letter-spacing:0px;white-space:nowrap;">G</div><div style="position:absolute;left:401.79999999999995px;width:400px;text-align:center;top:165.69px;font-size:10.1px;line-height:10.1px;color:#444;font-weight:400;letter-spacing:0px;white-space:nowrap;">H</div><div style="position:absolute;left:462.79999999999995px;width:400px;text-align:center;top:165.69px;font-size:10.1px;line-height:10.1px;color:#444;font-weight:400;letter-spacing:0px;white-space:nowrap;">I</div><div style="position:absolute;left:513.8px;width:400px;text-align:center;top:165.69px;font-size:10.1px;line-height:10.1px;color:#444;font-weight:400;letter-spacing:0px;white-space:nowrap;">J</div><div style="position:absolute;left:564.3px;width:400px;text-align:center;top:165.69px;font-size:10.1px;line-height:10.1px;color:#444;font-weight:400;letter-spacing:0px;white-space:nowrap;">K</div><div style="position:absolute;left:614.8px;width:400px;text-align:center;top:165.69px;font-size:10.1px;line-height:10.1px;color:#444;font-weight:400;letter-spacing:0px;white-space:nowrap;">L</div><svg style="position:absolute;left:9px;top:165.5px;" width="11" height="10" viewBox="0 0 11 10"><path d="M10 0.5 L10 9.5 L1 9.5 Z" fill="#b8b8b8"/></svg><div style="position:absolute;left:2px;top:177px;width:20px;height:269px;background:#e6e6e6"></div><div style="position:absolute;left:2px;top:234px;width:20px;height:48px;background:#d2d2d2"></div><div style="position:absolute;left:21px;top:177px;width:1px;height:269px;background:#b4b4b4"></div><div style="position:absolute;left:2px;top:193px;width:19px;height:1px;background:#cdcdcd"></div><div style="position:absolute;left:2px;top:209px;width:19px;height:1px;background:#cdcdcd"></div><div style="position:absolute;left:2px;top:234px;width:19px;height:1px;background:#cdcdcd"></div><div style="position:absolute;left:2px;top:250px;width:19px;height:1px;background:#cdcdcd"></div><div style="position:absolute;left:2px;top:266px;width:19px;height:1px;background:#cdcdcd"></div><div style="position:absolute;left:2px;top:282px;width:19px;height:1px;background:#cdcdcd"></div><div style="position:absolute;left:2px;top:297px;width:19px;height:1px;background:#cdcdcd"></div><div style="position:absolute;left:2px;top:313px;width:19px;height:1px;background:#cdcdcd"></div><div style="position:absolute;left:2px;top:329px;width:19px;height:1px;background:#cdcdcd"></div><div style="position:absolute;left:2px;top:345px;width:19px;height:1px;background:#cdcdcd"></div><div style="position:absolute;left:2px;top:361px;width:19px;height:1px;background:#cdcdcd"></div><div style="position:absolute;left:2px;top:377px;width:19px;height:1px;background:#cdcdcd"></div><div style="position:absolute;left:2px;top:393px;width:19px;height:1px;background:#cdcdcd"></div><div style="position:absolute;left:2px;top:409px;width:19px;height:1px;background:#cdcdcd"></div><div style="position:absolute;left:2px;top:425px;width:19px;height:1px;background:#cdcdcd"></div><div style="position:absolute;left:2px;top:441px;width:19px;height:1px;background:#cdcdcd"></div><div style="position:absolute;left:-188.2px;width:400px;text-align:center;top:180.73px;font-size:10.5px;line-height:10.5px;color:#444;font-weight:400;letter-spacing:-0.3px;white-space:nowrap;">1</div><div style="position:absolute;left:-188.2px;width:400px;text-align:center;top:196.73px;font-size:10.5px;line-height:10.5px;color:#444;font-weight:400;letter-spacing:-0.3px;white-space:nowrap;">2</div><div style="position:absolute;left:-188.2px;width:400px;text-align:center;top:221.73px;font-size:10.5px;line-height:10.5px;color:#444;font-weight:400;letter-spacing:-0.3px;white-space:nowrap;">3</div><div style="position:absolute;left:-188.2px;width:400px;text-align:center;top:237.73px;font-size:10.5px;line-height:10.5px;color:#1f5f3b;font-weight:400;letter-spacing:-0.3px;white-space:nowrap;">4</div><div style="position:absolute;left:-188.2px;width:400px;text-align:center;top:253.73px;font-size:10.5px;line-height:10.5px;color:#1f5f3b;font-weight:400;letter-spacing:-0.3px;white-space:nowrap;">5</div><div style="position:absolute;left:-188.2px;width:400px;text-align:center;top:269.74px;font-size:10.5px;line-height:10.5px;color:#1f5f3b;font-weight:400;letter-spacing:-0.3px;white-space:nowrap;">6</div><div style="position:absolute;left:-188.2px;width:400px;text-align:center;top:284.74px;font-size:10.5px;line-height:10.5px;color:#444;font-weight:400;letter-spacing:-0.3px;white-space:nowrap;">7</div><div style="position:absolute;left:-188.2px;width:400px;text-align:center;top:300.74px;font-size:10.5px;line-height:10.5px;color:#444;font-weight:400;letter-spacing:-0.3px;white-space:nowrap;">8</div><div style="position:absolute;left:-188.2px;width:400px;text-align:center;top:316.74px;font-size:10.5px;line-height:10.5px;color:#444;font-weight:400;letter-spacing:-0.3px;white-space:nowrap;">9</div><div style="position:absolute;left:-188.2px;width:400px;text-align:center;top:332.74px;font-size:10.5px;line-height:10.5px;color:#444;font-weight:400;letter-spacing:-0.3px;white-space:nowrap;">10</div><div style="position:absolute;left:-188.2px;width:400px;text-align:center;top:348.74px;font-size:10.5px;line-height:10.5px;color:#444;font-weight:400;letter-spacing:-0.3px;white-space:nowrap;">11</div><div style="position:absolute;left:-188.2px;width:400px;text-align:center;top:364.74px;font-size:10.5px;line-height:10.5px;color:#444;font-weight:400;letter-spacing:-0.3px;white-space:nowrap;">12</div><div style="position:absolute;left:-188.2px;width:400px;text-align:center;top:380.74px;font-size:10.5px;line-height:10.5px;color:#444;font-weight:400;letter-spacing:-0.3px;white-space:nowrap;">13</div><div style="position:absolute;left:-188.2px;width:400px;text-align:center;top:396.74px;font-size:10.5px;line-height:10.5px;color:#444;font-weight:400;letter-spacing:-0.3px;white-space:nowrap;">14</div><div style="position:absolute;left:-188.2px;width:400px;text-align:center;top:412.74px;font-size:10.5px;line-height:10.5px;color:#444;font-weight:400;letter-spacing:-0.3px;white-space:nowrap;">15</div><div style="position:absolute;left:-188.2px;width:400px;text-align:center;top:428.74px;font-size:10.5px;line-height:10.5px;color:#444;font-weight:400;letter-spacing:-0.3px;white-space:nowrap;">16</div><div style="position:absolute;left:20.5px;top:234px;width:1.7px;height:48px;background:#217346"></div><div style="position:absolute;left:123px;top:234px;width:297px;height:48px;background:#c6c6c6"></div><div style="position:absolute;left:123px;top:234px;width:127px;height:16px;background:#fff"></div><div style="position:absolute;left:123px;top:250px;width:297px;height:1px;background:#bababa"></div><div style="position:absolute;left:123px;top:265px;width:297px;height:1.5px;background:#bababa"></div><div style="position:absolute;left:250px;top:250px;width:1px;height:32px;background:#bababa"></div><div style="position:absolute;left:337px;top:234px;width:1px;height:48px;background:#bababa"></div><div style="position:absolute;left:122px;top:233px;width:298.5px;height:49.5px;border:2px solid #217346;box-sizing:border-box"></div><div style="position:absolute;left:416.5px;top:279px;width:6px;height:6px;background:#217346;border:1px solid #fff;box-sizing:border-box"></div><div style="position:absolute;left:126px;top:237.60px;font-size:10.8px;line-height:10.8px;color:#222;font-weight:400;letter-spacing:0.02px;white-space:nowrap;">Product Name</div><div style="position:absolute;left:126px;top:253.60px;font-size:10.8px;line-height:10.8px;color:#222;font-weight:400;letter-spacing:-0.02px;white-space:nowrap;">&lt;Product Name&gt;</div><div style="position:absolute;left:253px;top:237.60px;font-size:10.8px;line-height:10.8px;color:#222;font-weight:400;letter-spacing:-0.15px;white-space:nowrap;">Total Sales</div><div style="position:absolute;left:253px;top:253.60px;font-size:10.8px;line-height:10.8px;color:#222;font-weight:400;letter-spacing:-0.15px;white-space:nowrap;">&lt;Total Sales&gt;</div><div style="position:absolute;left:339.6px;top:237.60px;font-size:10.8px;line-height:10.8px;color:#222;font-weight:400;letter-spacing:0.0px;white-space:nowrap;">Gross Profit</div><div style="position:absolute;left:339.6px;top:253.60px;font-size:10.8px;line-height:10.8px;color:#222;font-weight:400;letter-spacing:-0.15px;white-space:nowrap;">&lt;Gross Profit&gt;</div><div style="position:absolute;left:0px;top:0px;width:1px;height:470px;background:#e4e4e4"></div><div style="position:absolute;left:1px;top:24px;width:1px;height:446px;background:#9e9e9e"></div><div style="position:absolute;left:2px;top:25px;width:1px;height:100px;background:#fbfbfb"></div><div style="position:absolute;left:2px;top:446px;width:797px;height:24px;background:#e6e6e6"></div><div style="position:absolute;left:0px;top:445.5px;width:799px;height:1px;background:#b8b8b8"></div><svg style="position:absolute;left:21px;top:452px;" width="7" height="9" viewBox="0 0 7 9"><path d="M5 1 L1.5 4.5 L5 8Z" fill="#c0c0c0"/></svg><svg style="position:absolute;left:44px;top:452px;" width="7" height="9" viewBox="0 0 7 9"><path d="M2 1 L5.5 4.5 L2 8Z" fill="#c0c0c0"/></svg><div style="position:absolute;left:81px;top:446px;width:51.5px;height:20px;background:#fff;border-left:1px solid #b8b8b8;border-right:1px solid #b8b8b8;box-sizing:border-box"></div><div style="position:absolute;left:81px;top:464px;width:51.5px;height:2px;background:#217346"></div><div style="position:absolute;left:-93.5px;width:400px;text-align:center;top:452.30px;font-size:10px;line-height:10px;color:#1d6b40;font-weight:700;letter-spacing:-0.3px;white-space:nowrap;-webkit-text-stroke:0;">Sheet1</div><svg style="position:absolute;left:157.5px;top:449.5px;" width="15" height="15" viewBox="0 0 15 15"><circle cx="7.5" cy="7.5" r="6.3" fill="none" stroke="#666" stroke-width="1"/><path d="M7.5 4 L7.5 11 M4 7.5 L11 7.5" stroke="#555" stroke-width="1.2"/></svg><div style="position:absolute;left:533px;top:453px;width:1.3px;height:1.3px;background:#8a8a8a"></div><div style="position:absolute;left:533px;top:456.5px;width:1.3px;height:1.3px;background:#8a8a8a"></div><div style="position:absolute;left:533px;top:460px;width:1.3px;height:1.3px;background:#8a8a8a"></div><div style="position:absolute;left:546px;top:452px;width:260px;height:11.5px;background:#fff;border:1px solid #b0b0b0;box-sizing:border-box"></div><div style="position:absolute;left:558px;top:452.5px;width:1.5px;height:11px;background:#b0b0b0"></div><svg style="position:absolute;left:549px;top:454px;" width="6" height="8" viewBox="0 0 6 8"><path d="M4.5 1 L1 4 L4.5 7Z" fill="#333"/></svg><div style="position:absolute;left:0px;top:468px;width:799px;height:2px;background:#d8d8d8"></div><div style="position:absolute;left:585px;top:262px;width:194px;height:126px;background:#5dc6e8;border:1px solid #4a4a4a;box-sizing:border-box"></div><div style="position:absolute;left:715px;top:262px;width:22.5px;height:18px;background:#5dc6e8;border-left:1px solid #3a3a3a;border-bottom:1px solid #3a3a3a;border-top:1px solid #3a3a3a;box-sizing:border-box"></div><div style="position:absolute;left:737.5px;top:262px;width:36.5px;height:18px;background:#c7504d;border-bottom:1px solid #3a3a3a;border-top:1px solid #3a3a3a;border-right:1px solid #3a3a3a;box-sizing:border-box"></div><div style="position:absolute;left:526.5px;width:400px;text-align:center;top:266.20px;font-size:10px;line-height:10px;color:#111;font-weight:700;letter-spacing:0px;white-space:nowrap;-webkit-text-stroke:0;">?</div><svg style="position:absolute;left:751px;top:267px;" width="9" height="9" viewBox="0 0 9 9"><path d="M1.2 1.2 L7.8 7.8 M7.8 1.2 L1.2 7.8" stroke="#111" stroke-width="1.9"/></svg><div style="position:absolute;left:453.20000000000005px;width:400px;text-align:center;top:269.16px;font-size:12.6px;line-height:12.6px;color:#1a2b40;font-weight:400;letter-spacing:-0.35px;white-space:nowrap;">Create Table</div><div style="position:absolute;left:591px;top:287px;width:182px;height:94.5px;background:#f0f0f0"></div><div style="position:absolute;left:596.3px;top:293.75px;font-size:9.6px;line-height:9.6px;color:#222;font-weight:400;letter-spacing:-0.2px;white-space:nowrap;"><u>W</u>here is the data for your table?</div><div style="position:absolute;left:615px;top:305.5px;width:152.5px;height:16px;background:#fff;border:1px solid #adadad;box-sizing:border-box"></div><div style="position:absolute;left:750px;top:306.5px;width:16.5px;height:14px;background:#f0f0f0;border:1px solid #8a8a8a;border-right:none;box-sizing:border-box"></div><svg style="position:absolute;left:753px;top:308px;" width="12" height="11" viewBox="0 0 12 11"><path d="M6 1 L10 5 L7.3 5 L7.3 8 L4.7 8 L4.7 5 L2 5 Z" fill="#111"/><rect x="2" y="9" width="8" height="1.3" fill="#111"/></svg><div style="position:absolute;left:618.7px;top:310.33px;font-size:9px;line-height:9px;color:#222;font-weight:400;letter-spacing:-0.3px;white-space:nowrap;">=$C$4:$E$6</div><div style="position:absolute;left:615px;top:330px;width:11px;height:11px;background:#fff;border:1px solid #333;box-sizing:border-box"></div><svg style="position:absolute;left:615px;top:330px;" width="11" height="11" viewBox="0 0 11 11"><path d="M2.3 5.5 L4.5 8 L9 2.5" fill="none" stroke="#111" stroke-width="1.7"/></svg><div style="position:absolute;left:627.5px;top:329.5px;width:89px;height:12px;border:1px dotted #333;box-sizing:border-box"></div><div style="position:absolute;left:629.5px;top:330.75px;font-size:9.6px;line-height:9.6px;color:#222;font-weight:400;letter-spacing:-0.29px;white-space:nowrap;"><u>M</u>y table has headers</div><div style="position:absolute;left:641px;top:358px;width:59.5px;height:17.5px;background:#bee6fd;border:1px solid #3c7fb1;box-sizing:border-box"></div><div style="position:absolute;left:471px;width:400px;text-align:center;top:361.75px;font-size:9.6px;line-height:9.6px;color:#222;font-weight:400;letter-spacing:0px;white-space:nowrap;">OK</div><div style="position:absolute;left:708px;top:358px;width:59px;height:17.5px;background:#e1e1e1;border:1px solid #adadad;box-sizing:border-box"></div><div style="position:absolute;left:537.8px;width:400px;text-align:center;top:361.75px;font-size:9.6px;line-height:9.6px;color:#222;font-weight:400;letter-spacing:-0.37px;white-space:nowrap;">Cancel</div><svg style="position:absolute;left:651px;top:368px;" width="14" height="20" viewBox="0 0 14 20"><path d="M1.5 1 L1.5 15 L4.8 12 L7.5 18 L10 17 L7.5 11 L12 11 Z" fill="#fff" stroke="#111" stroke-width="1"/></svg>
</body></html>
